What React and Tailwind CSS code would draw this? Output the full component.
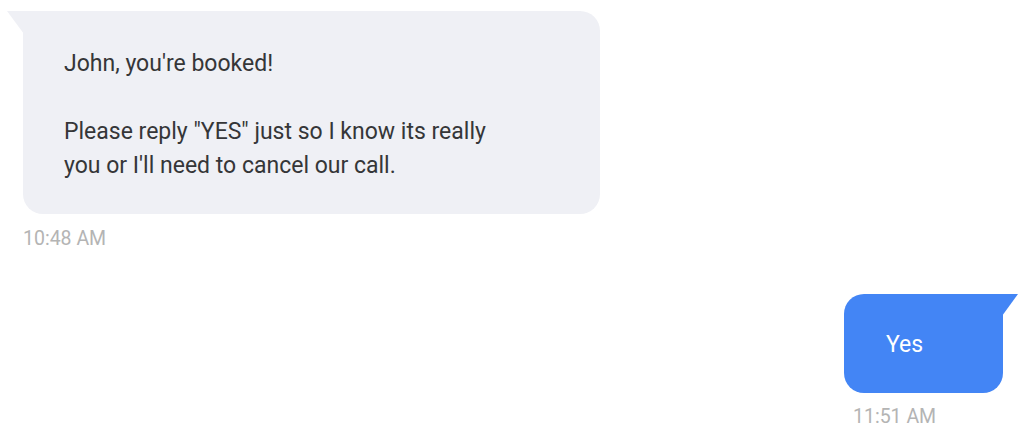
export default function App() {
  return (
    <div className="w-[1024px] h-[437px] bg-white overflow-hidden pt-[11px] flex flex-col" style={{ fontFamily: 'Roboto, "Noto Sans", sans-serif' }}>
      {/* incoming */}
      <div className="flex flex-col items-start pl-[23px]">
        <div className="relative w-[577px] h-[203px] bg-[#eff0f5] rounded-[20px] rounded-tl-none pl-[41px] pt-[36px] text-[23px] leading-[34px] text-[#353638]">
          <svg className="absolute left-[-16px] top-0" width="17" height="23" viewBox="0 0 17 23">
            <polygon points="0,0 17,0 17,23" fill="#eff0f5" />
          </svg>
          <p>John, you're booked!</p>
          <p>&nbsp;</p>
          <p>Please reply "YES" just so I know its really</p>
          <p>you or I'll need to cancel our call.</p>
        </div>
        <div className="mt-[15px] text-[19.5px] leading-[20px] text-[#b4b4b4]">10:48 AM</div>
      </div>

      {/* outgoing */}
      <div className="flex flex-col items-start self-end mr-[21px] mt-[45px]">
        <div className="relative w-[159px] h-[99px] bg-[#4385f5] rounded-[20px] rounded-tr-none pl-[42px] pt-[34px] text-[23px] leading-[34px] text-white">
          <svg className="absolute right-[-15px] top-0" width="16" height="22" viewBox="0 0 16 22">
            <polygon points="0,0 16,0 0,22" fill="#4385f5" />
          </svg>
          Yes
        </div>
        <div className="mt-[14px] ml-[9px] text-[19.5px] leading-[20px] text-[#b4b4b4]">11:51 AM</div>
      </div>
    </div>
  );
}
